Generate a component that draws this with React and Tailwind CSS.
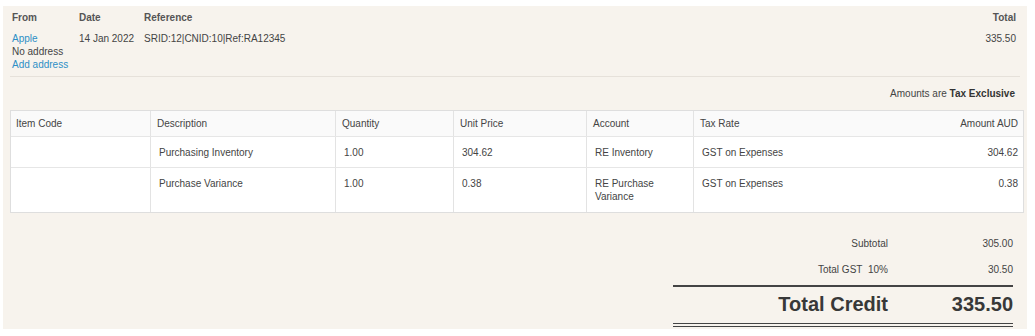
import React from 'react';

const columns = [
  { key: 'code', label: 'Item Code', width: 'w-[139px]' },
  { key: 'desc', label: 'Description', width: 'w-[185px]' },
  { key: 'qty', label: 'Quantity', width: 'w-[118px]' },
  { key: 'price', label: 'Unit Price', width: 'w-[133px]' },
  { key: 'account', label: 'Account', width: 'w-[107px]' },
  { key: 'tax', label: 'Tax Rate', width: 'flex-1' },
  { key: 'amount', label: 'Amount AUD', width: 'w-[150px]', right: true, bare: true },
];

const lines = [
  { code: '', desc: 'Purchasing Inventory', qty: '1.00', price: '304.62', account: 'RE Inventory', tax: 'GST on Expenses', amount: '304.62', h: 'h-[31px]' },
  { code: '', desc: 'Purchase Variance', qty: '1.00', price: '0.38', account: 'RE Purchase Variance', tax: 'GST on Expenses', amount: '0.38', h: 'h-[44px]' },
];

const App = () => {
  return (
    <div className="bg-white pt-[6px] pl-[3px] pr-[8px] h-[336px] font-['Liberation_Sans',Arial,sans-serif] text-[10px] leading-[13px] text-[#444]">
      <div className="bg-[#f7f3ed] h-[323px] pl-[7px] pr-[3px] pt-[5px]">
        {/* header */}
        <div className="flex pl-[2px] pr-[8px]">
          <div className="w-[67px]">
            <div className="font-bold text-[#555]">From</div>
            <div className="mt-[8px] text-[#2d8fc6]">Apple</div>
            <div>No address</div>
            <div className="text-[#2d8fc6]">Add address</div>
          </div>
          <div className="w-[65px]">
            <div className="font-bold text-[#555]">Date</div>
            <div className="mt-[8px]">14 Jan 2022</div>
          </div>
          <div className="flex-1">
            <div className="font-bold text-[#555]">Reference</div>
            <div className="mt-[8px]">SRID:12|CNID:10|Ref:RA12345</div>
          </div>
          <div className="text-right">
            <div className="font-bold text-[#555]">Total</div>
            <div className="mt-[8px]">335.50</div>
          </div>
        </div>
        <div className="mt-[5px] mr-[4px] border-t border-[#e6e1da]" />
        <div className="mt-[10px] pr-[9px] text-right">
          Amounts are <span className="font-bold text-[#333]">Tax Exclusive</span>
        </div>

        {/* line items */}
        <div className="mt-[10px] w-[1014px] border border-[#dedede] bg-white">
          <div className="flex h-[26px] bg-[#fafafa] border-b border-[#e6e6e6]">
            {columns.map((c, i) => (
              <div
                key={c.key}
                className={`${c.width} pt-[6px] ${i === 0 ? 'pl-[5px]' : 'pl-[6px]'} ${i > 0 && !c.bare ? 'border-l border-[#e3e3e3]' : ''} ${c.right ? 'text-right pr-[5px]' : ''}`}
              >
                {c.label}
              </div>
            ))}
          </div>
          {lines.map((row, r) => (
            <div key={r} className={`flex ${row.h} ${r === 0 ? 'border-b border-[#e6e6e6]' : ''}`}>
              {columns.map((c, i) => (
                <div
                  key={c.key}
                  className={`${c.width} pt-[9px] ${i === 0 ? 'pl-[5px]' : 'pl-[8px]'} ${i > 0 && !c.bare ? 'border-l border-[#e3e3e3]' : ''} ${c.right ? 'text-right pr-[5px]' : ''} ${c.key === 'account' ? 'pr-[20px]' : ''}`}
                >
                  {row[c.key]}
                </div>
              ))}
            </div>
          ))}
        </div>

        {/* totals */}
        <div className="flex justify-end">
          <div className="w-[340px] mt-[24px] mr-[11px]">
            <div className="flex">
              <div className="w-[215px] text-right">Subtotal</div>
              <div className="flex-1 text-right">305.00</div>
            </div>
            <div className="flex mt-[13px]">
              <div className="w-[215px] text-right">Total GST&nbsp;&nbsp;10%</div>
              <div className="flex-1 text-right">30.50</div>
            </div>
            <div className="mt-[9px] border-t-2 border-[#444]" />
            <div className="flex mt-[6px] text-[20px] leading-[23px] font-bold text-[#383838]">
              <div className="w-[215px] text-right">Total Credit</div>
              <div className="flex-1 text-right">335.50</div>
            </div>
            <div className="mt-[7px] border-b-[4px] border-double border-[#444]" />
          </div>
        </div>
      </div>
    </div>
  );
};

export default App;
